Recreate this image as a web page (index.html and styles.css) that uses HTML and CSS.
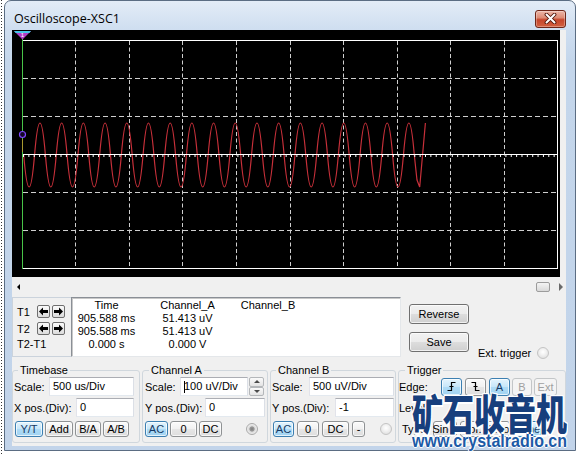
FILE: index.html
```html
<!DOCTYPE html>
<html lang="en">
<head>
<meta charset="utf-8">
<title>Oscilloscope-XSC1</title>
<link rel="stylesheet" href="styles.css">
</head>
<body>
<div class="window">
  <header class="titlebar">
    <span class="title">Oscilloscope-XSC1</span>
    <span class="close">
      <svg width="13" height="11" viewBox="0 0 13 11"><path class="x-out" d="M2.5,1.5 L10.5,9.5 M10.5,1.5 L2.5,9.5"/><path class="x-in" d="M2.5,1.5 L10.5,9.5 M10.5,1.5 L2.5,9.5"/></svg>
    </span>
  </header>
  <main class="client">
    <div class="scope">
      <svg class="screen" width="548" height="247" viewBox="12 30 548 247">
        <path class="grid-v" d="M75.5,41V268M129.5,41V268M182.5,41V268M236.5,41V268M290.5,41V268M343.5,41V268M397.5,41V268M450.5,41V268M504.5,41V268"/>
        <path class="grid-h" d="M23,78.5H557M23,116.5H557M23,192.5H557M23,230.5H557"/>
        <rect class="frame" x="22.5" y="40.5" width="535" height="228"/>
        <path class="wave" d="M23.7,155 q5.425,64 10.85,0 t10.85,0 t10.85,0 t10.85,0 t10.85,0 t10.85,0 t10.85,0 t10.85,0 t10.85,0 t10.85,0 t10.85,0 t10.85,0 t10.85,0 t10.85,0 t10.85,0 t10.85,0 t10.85,0 t10.85,0 t10.85,0 t10.85,0 t10.85,0 t10.85,0 t10.85,0 t10.85,0 t10.85,0 t10.85,0 t10.85,0 t10.85,0 t10.85,0 t10.85,0 t10.85,0 t10.85,0 t10.85,0 t10.85,0 t10.85,0 t10.85,0 L417,180 L419.7,187 L425.4,123"/>
        <path class="center" d="M23,154.5H558"/>
        <path class="ticks" d="M23,156H558"/>
        <path class="cursor1" d="M22.5,33V269"/>
        <path class="marker-y" d="M22.5,139V152"/>
        <circle class="marker-c" cx="22.5" cy="134.5" r="3"/>
        <polygon class="tri" points="14,31 31,31 22.5,39.5"/>
        <polygon class="tri-top" points="14,31 31,31 29.3,33 15.7,33"/>
        <text class="tri-num" x="22.5" y="37">1</text>
      </svg>
    </div>
    <div class="hscroll">
      <span class="sarrow left"></span>
      <span class="thumb"></span>
      <span class="sarrow right"></span>
    </div>
    <section class="cursors">
      <div class="tbox">
        <div class="trow">
          <span class="tl">T1</span>
          <span class="ab"><svg width="9" height="9" viewBox="0 0 9 9"><polygon points="0,4.5 4,0.5 4,3 9,3 9,6 4,6 4,8.5"/></svg></span>
          <span class="ab"><svg width="9" height="9" viewBox="0 0 9 9"><polygon points="9,4.5 5,0.5 5,3 0,3 0,6 5,6 5,8.5"/></svg></span>
        </div>
        <div class="trow">
          <span class="tl">T2</span>
          <span class="ab"><svg width="9" height="9" viewBox="0 0 9 9"><polygon points="0,4.5 4,0.5 4,3 9,3 9,6 4,6 4,8.5"/></svg></span>
          <span class="ab"><svg width="9" height="9" viewBox="0 0 9 9"><polygon points="9,4.5 5,0.5 5,3 0,3 0,6 5,6 5,8.5"/></svg></span>
        </div>
        <div class="tdiff">T2-T1</div>
      </div>
      <div class="readout">
        <span>Time</span><span>Channel_A</span><span>Channel_B</span>
        <span>905.588 ms</span><span>51.413 uV</span><span></span>
        <span>905.588 ms</span><span>51.413 uV</span><span></span>
        <span>0.000 s</span><span>0.000 V</span><span></span>
      </div>
      <div class="actions">
        <div class="btncol">
          <span class="btn big">Reverse</span>
          <span class="btn big">Save</span>
        </div>
        <div class="ext"><span>Ext. trigger</span><span class="radio"></span></div>
      </div>
    </section>
    <div class="groups">
      <fieldset class="group g-time">
        <legend>Timebase</legend>
        <div class="row"><span>Scale:</span><span class="field w85">500 us/Div</span></div>
        <div class="row"><span>X pos.(Div):</span><span class="field w58">0</span></div>
        <div class="brow">
          <span class="btn on w28">Y/T</span><span class="btn w28">Add</span><span class="btn w26">B/A</span><span class="btn w26">A/B</span>
        </div>
      </fieldset>
      <fieldset class="group g-cha">
        <legend>Channel A</legend>
        <div class="row"><span>Scale:</span><span class="field w68"><span class="caret"></span>100 uV/Div</span><span class="spin"><span class="sb up"></span><span class="sb down"></span></span></div>
        <div class="row"><span>Y pos.(Div):</span><span class="field w60">0</span></div>
        <div class="brow">
          <span class="btn on w23">AC</span><span class="btn w27">0</span><span class="btn w23">DC</span><span class="radio dot"></span>
        </div>
      </fieldset>
      <fieldset class="group g-chb">
        <legend>Channel B</legend>
        <div class="row"><span>Scale:</span><span class="field w85">500 uV/Div</span></div>
        <div class="row"><span>Y pos.(Div):</span><span class="field w59">-1</span></div>
        <div class="brow">
          <span class="btn on w21">AC</span><span class="btn w22">0</span><span class="btn w27">DC</span><span class="btn w13">-</span><span class="radio"></span>
        </div>
      </fieldset>
      <fieldset class="group g-trig">
        <legend>Trigger</legend>
        <div class="row">
          <span>Edge:</span>
          <span class="edge">
            <span class="btn on tall w21"><svg width="11" height="11" viewBox="0 0 11 11"><path d="M1.5,9.5H5.5V1.5H9.5M3.5,5.5H7.5"/></svg></span>
            <span class="btn tall w21"><svg width="11" height="11" viewBox="0 0 11 11"><path d="M1.5,1.5H5.5V9.5H9.5M3.5,5.5H7.5"/></svg></span>
            <span class="btn on tall w21">A</span>
            <span class="btn dis tall w20">B</span>
            <span class="btn dis tall w23">Ext</span>
          </span>
        </div>
        <div class="row"><span>Level:</span></div>
        <div class="brow">
          <span class="type">Type</span>
          <span class="btn w24">Sing.</span><span class="btn w23">Nor.</span><span class="btn w24">Auto</span><span class="btn on w28">None</span>
        </div>
      </fieldset>
    </div>
  </main>
</div>
<div class="watermark">
  <div class="wm-cn">矿石收音机</div>
  <div class="wm-url">www.crystalradio.cn</div>
</div>
</body>
</html>
```
FILE: styles.css
```css
html, body {
  margin: 0;
  padding: 0;
}
body {
  width: 578px;
  height: 455px;
  overflow: hidden;
  position: relative;
  background-color: #fff;
  background-image: repeating-linear-gradient(to bottom, #333 0 1px, transparent 1px 3px);
  background-size: 1px 100%;
  background-position: 1px 0;
  background-repeat: no-repeat;
  font-family: "Liberation Sans", Arial, sans-serif;
  font-size: 11px;
  color: #000;
}

.window {
  margin-left: 4px;
  width: 572px;
  height: 451px;
  box-sizing: border-box;
  border: 1px solid #5b6d83;
  border-radius: 7px 7px 0 0;
  background: linear-gradient(#e3ecf7 0, #cfdef0 28px, #c4d6eb 60px, #c2d4ea 100%);
  padding: 0 9px 4px 7px;
  display: flex;
  flex-direction: column;
}

.titlebar {
  height: 29px;
  box-sizing: border-box;
  padding-top: 6px;
  display: flex;
  align-items: center;
  justify-content: space-between;
}
.title {
  font-family: "Open Sans", "Liberation Sans", sans-serif;
  font-size: 12.5px;
  padding-left: 2px;
  color: #000;
}
.close {
  width: 31px;
  height: 18px;
  box-sizing: border-box;
  border: 1px solid #6e2618;
  border-radius: 3px;
  background: linear-gradient(#ecb6a8 0%, #dd8b74 42%, #c5452b 55%, #d2603f 100%);
  box-shadow: inset 0 0 0 1px rgba(255, 255, 255, 0.3);
  display: flex;
  align-items: center;
  justify-content: center;
}
.x-out { stroke: #4e1409; stroke-width: 3.8; fill: none; stroke-linecap: round; }
.x-in { stroke: #fff; stroke-width: 2; fill: none; stroke-linecap: round; }

.client {
  flex: 1;
  background: #f0f0f0;
  display: flex;
  flex-direction: column;
}

.scope {
  width: 548px;
  height: 247px;
  background: #000;
}
.screen { display: block; }
.grid-v { stroke: #cfcfcf; stroke-width: 1; stroke-dasharray: 4 2.5; fill: none; }
.grid-h { stroke: #cfcfcf; stroke-width: 1; stroke-dasharray: 5 3; fill: none; }
.frame { stroke: #fff; stroke-width: 1; fill: none; }
.wave { stroke: #c8303a; stroke-width: 1.2; fill: none; }
.center { stroke: #fff; stroke-width: 1; fill: none; }
.ticks { stroke: #fff; stroke-width: 2; stroke-dasharray: 1 4.36; fill: none; }
.cursor1 { stroke: #48c448; stroke-width: 1; fill: none; }
.marker-y { stroke: #a89a30; stroke-width: 1; }
.marker-c { stroke: #8048ff; stroke-width: 1.2; fill: #140828; }
.tri { fill: #b23ec8; }
.tri-top { fill: #46c6e6; }
.tri-num { fill: #fff; font-size: 6px; text-anchor: middle; font-family: "Liberation Sans", sans-serif; }

.hscroll {
  height: 19px;
  display: flex;
  align-items: center;
  padding: 0 3px 0 5px;
}
.sarrow.left {
  width: 0;
  height: 0;
  border-top: 3px solid transparent;
  border-bottom: 3px solid transparent;
  border-right: 3px solid #000;
}
.thumb {
  margin-left: auto;
  width: 14px;
  height: 10px;
  box-sizing: border-box;
  border: 1px solid #9c9c9c;
  border-radius: 2px;
  background: linear-gradient(#f4f4f4, #d9d9d9);
}
.sarrow.right {
  margin-left: 9px;
  width: 0;
  height: 0;
  border-top: 4px solid transparent;
  border-bottom: 4px solid transparent;
  border-left: 4px solid #6a6a6a;
}

.cursors {
  height: 60px;
  margin-top: 1px;
  display: flex;
}
.tbox {
  width: 59px;
  box-sizing: border-box;
  border: 1px solid #cbd3dc;
  border-right: 0;
  padding: 7px 0 0 4px;
}
.trow {
  display: flex;
  align-items: center;
  height: 13px;
}
.trow + .trow { margin-top: 4px; }
.tl { width: 20px; }
.ab {
  box-sizing: border-box;
  width: 13px;
  height: 13px;
  margin-right: 2px;
  border: 1px solid #6f6f6f;
  border-radius: 2px;
  background: linear-gradient(#fbfbfb, #dcdcdc);
  display: flex;
  align-items: center;
  justify-content: center;
}
.ab svg { display: block; }
.tdiff { margin-top: 3px; line-height: 13px; }

.readout {
  width: 330px;
  box-sizing: border-box;
  background: #fff;
  border: 1px solid;
  border-color: #8a8f96 #e4e7ea #e4e7ea #8a8f96;
  box-shadow: inset 1px 1px 0 #c8c8c8;
  display: grid;
  grid-template-columns: 69px 93px 68px;
  grid-auto-rows: 13px;
  align-content: start;
  padding-top: 1px;
  line-height: 13px;
  text-align: center;
  white-space: nowrap;
}

.actions {
  display: flex;
  margin-left: 8px;
}
.btncol {
  display: flex;
  flex-direction: column;
  gap: 8px;
  padding-top: 7px;
}
.ext {
  display: flex;
  align-items: center;
  align-self: flex-end;
  height: 12px;
  margin-left: 9px;
  margin-bottom: -2px;
  gap: 6px;
}

.btn {
  box-sizing: border-box;
  height: 16px;
  border: 1px solid #8f9294;
  border-radius: 3px;
  background: linear-gradient(#fbfbfb 0%, #f1f1f1 50%, #e6e6e6 51%, #dedede 100%);
  box-shadow: inset 0 0 0 1px rgba(255, 255, 255, 0.7);
  display: flex;
  align-items: center;
  justify-content: center;
  line-height: 14px;
  white-space: nowrap;
  color: #000;
}
.btn.big { width: 60px; height: 20px; border-color: #707070; background: linear-gradient(#f2f2f2 0%, #ebebeb 50%, #dddddd 51%, #cfcfcf 100%); }
.btn.on {
  border-color: #3c7fb1;
  background: linear-gradient(#e4f4fd 0%, #c6e6f9 50%, #aedbf6 51%, #a2d3f1 100%);
  color: #173a64;
}
.btn.dis {
  border-color: #c3c6c8;
  background: #f4f4f4;
  box-shadow: none;
  color: #a0a0a0;
}
.btn.tall { height: 18px; }
.btn svg path { stroke: #000; stroke-width: 1.2; fill: none; }
.w13 { width: 13px; }
.w20 { width: 20px; }
.w21 { width: 21px; }
.w22 { width: 22px; }
.w23 { width: 23px; }
.w24 { width: 24px; }
.w26 { width: 26px; }
.w27 { width: 27px; }
.w28 { width: 28px; }

.radio {
  width: 12px;
  height: 12px;
  box-sizing: border-box;
  border-radius: 50%;
  border: 1px solid #c4c4c4;
  background: radial-gradient(circle at 50% 40%, #ffffff 0, #f2f2f2 3px, #e2e2e2 6px);
  flex: none;
}
.radio.dot {
  border-color: #a9a9a9;
  background: radial-gradient(circle at 50% 50%, #7d7d7d 0, #9a9a9a 2.2px, #dadada 3px, #efefef 5px);
}

.groups {
  display: flex;
  gap: 2px;
  margin-top: 7px;
}
.group {
  margin: 0;
  padding: 0 5px 5px 1px;
  border: 1px solid #d0d7dd;
  border-radius: 3px;
  min-width: 0;
  box-sizing: border-box;
}
.group legend {
  padding: 0 2px;
  margin-left: 4px;
  line-height: 13px;
  font-size: 11px;
}
.g-time { width: 128px; }
.g-cha { width: 126px; padding: 0 2px 5px 2px; }
.g-chb { width: 126px; padding: 0 1px 5px 1px; }
.g-trig { width: 168px; padding: 0 1px 5px 0; }
.g-trig legend { margin-left: 6px; }

.row {
  display: flex;
  align-items: center;
  height: 19px;
  white-space: nowrap;
}
.row + .row { margin-top: 2px; }
.field {
  margin-left: auto;
  box-sizing: border-box;
  height: 19px;
  border: 1px solid;
  border-color: #abadb3 #dbdfe6 #e3e9ef #e2e3ea;
  background: #fff;
  padding-left: 3px;
  line-height: 17px;
  display: flex;
  align-items: center;
}
.w85.field { width: 85px; }
.w58.field { width: 58px; }
.w59.field { width: 59px; }
.w60.field { width: 60px; }
.w68.field { width: 68px; }
.caret {
  width: 1px;
  height: 12px;
  background: #000;
  margin-right: -1px;
}
.spin {
  width: 15px;
  height: 19px;
  margin-left: 1px;
  margin-right: 1px;
  display: flex;
  flex-direction: column;
}
.sb {
  flex: 1;
  box-sizing: border-box;
  border: 1px solid #b4b7ba;
  border-radius: 2px;
  background: linear-gradient(#fafafa, #e4e4e4);
  display: flex;
  align-items: center;
  justify-content: center;
}
.sb.up::after {
  content: "";
  border-left: 3px solid transparent;
  border-right: 3px solid transparent;
  border-bottom: 3px solid #4a4a4a;
}
.sb.down::after {
  content: "";
  border-left: 3px solid transparent;
  border-right: 3px solid transparent;
  border-top: 3px solid #4a4a4a;
}

.brow {
  display: flex;
  align-items: center;
  height: 16px;
  margin-top: 4px;
  gap: 2px;
}
.g-time .brow { padding-left: 1px; }
.g-cha .brow .radio { margin-left: auto; margin-right: 7px; }
.g-chb .brow { padding-left: 1px; gap: 3px; }
.g-chb .brow .radio { margin-left: auto; margin-right: 2px; }
.edge {
  margin-left: auto;
  margin-right: 7px;
  display: flex;
  gap: 2px;
}
.edge .btn:nth-child(2), .edge .btn:nth-child(3) { margin-left: 1px; }
.g-trig .brow { gap: 3px; }
.type { width: 28px; margin-left: 3px; }

.watermark {
  position: absolute;
  left: 412px;
  top: 391px;
  width: 166px;
  pointer-events: none;
}
.wm-cn {
  font-family: "Noto Sans CJK SC", "Noto Sans CJK TC", sans-serif;
  font-weight: 900;
  font-size: 31px;
  line-height: 31px;
  color: #173f7d;
  white-space: nowrap;
  transform: scaleY(1.35);
  transform-origin: 0 0;
  text-shadow: 1px 0 #fff, -1px 0 #fff, 0 1px #fff, 0 -1px #fff, 1px 1px #fff, -1px -1px #fff, 1px -1px #fff, -1px 1px #fff;
}
.wm-url {
  margin-top: 9px;
  font-family: "Liberation Sans", Arial, sans-serif;
  font-weight: bold;
  font-size: 16px;
  line-height: 16px;
  color: #1c5aa6;
  white-space: nowrap;
  transform: scaleY(1.2);
  transform-origin: 0 0;
  text-shadow: 1px 0 #fff, -1px 0 #fff, 0 1px #fff, 0 -1px #fff;
}
```
